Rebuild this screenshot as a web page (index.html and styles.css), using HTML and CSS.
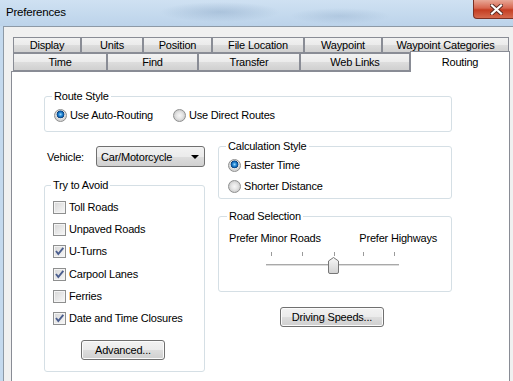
FILE: index.html
```html
<!DOCTYPE html>
<html lang="en">
<head>
    <meta charset="UTF-8">
    <meta name="viewport" content="width=device-width, initial-scale=1.0">
    <title>Preferences</title>
    <link rel="stylesheet" href="styles.css">
</head>
<body>
    <div class="window">
        <div class="titlebar">
            <span class="title">Preferences</span>
            <span class="close">
                <svg width="13" height="11" viewBox="0 0 13 11">
                    <path d="M2 1.5 L11 9.5 M11 1.5 L2 9.5" stroke="#5a2a22" stroke-width="4" stroke-linecap="square"/>
                    <path d="M2 1.5 L11 9.5 M11 1.5 L2 9.5" stroke="#ffffff" stroke-width="2.2" stroke-linecap="square"/>
                </svg>
            </span>
        </div>

        <div class="frame">
            <div class="client">
                <!-- tab strip, two rows -->
                <div class="tab-row">
                    <div class="tab w68">Display</div>
                    <div class="tab w62">Units</div>
                    <div class="tab w69">Position</div>
                    <div class="tab w92">File Location</div>
                    <div class="tab w78">Waypoint</div>
                    <div class="tab w127">Waypoint Categories</div>
                </div>
                <div class="tab-row second">
                    <div class="tab w94">Time</div>
                    <div class="tab w91">Find</div>
                    <div class="tab w102">Transfer</div>
                    <div class="tab w110">Web Links</div>
                    <div class="tab selected w100">Routing</div>
                </div>

                <div class="panel">
                    <fieldset class="group route">
                        <legend>Route Style</legend>
                        <div class="options">
                            <div class="opt"><span class="radio on"></span>Use Auto-Routing</div>
                            <div class="opt"><span class="radio"></span>Use Direct Routes</div>
                        </div>
                    </fieldset>

                    <div class="columns">
                        <div class="left">
                            <div class="vehicle">
                                <span>Vehicle:</span>
                                <div class="select">
                                    <span>Car/Motorcycle</span>
                                    <span class="arrow"></span>
                                </div>
                            </div>

                            <fieldset class="group avoid">
                                <legend>Try to Avoid</legend>
                                <div class="checks">
                                    <div class="opt"><span class="check"></span>Toll Roads</div>
                                    <div class="opt"><span class="check"></span>Unpaved Roads</div>
                                    <div class="opt"><span class="check"><svg width="11" height="11" viewBox="0 0 11 11"><path d="M2 5 L4.3 8 L9.3 1.8" fill="none" stroke="#4b5e8e" stroke-width="1.9"/></svg></span>U-Turns</div>
                                    <div class="opt"><span class="check"><svg width="11" height="11" viewBox="0 0 11 11"><path d="M2 5 L4.3 8 L9.3 1.8" fill="none" stroke="#4b5e8e" stroke-width="1.9"/></svg></span>Carpool Lanes</div>
                                    <div class="opt"><span class="check"></span>Ferries</div>
                                    <div class="opt"><span class="check"><svg width="11" height="11" viewBox="0 0 11 11"><path d="M2 5 L4.3 8 L9.3 1.8" fill="none" stroke="#4b5e8e" stroke-width="1.9"/></svg></span>Date and Time Closures</div>
                                </div>
                                <div class="button advanced">Advanced...</div>
                            </fieldset>
                        </div>

                        <div class="right">
                            <fieldset class="group calc">
                                <legend>Calculation Style</legend>
                                <div class="radios">
                                    <div class="opt"><span class="radio on"></span>Faster Time</div>
                                    <div class="opt"><span class="radio"></span>Shorter Distance</div>
                                </div>
                            </fieldset>

                            <fieldset class="group roads">
                                <legend>Road Selection</legend>
                                <div class="slider-labels">
                                    <span>Prefer Minor Roads</span>
                                    <span>Prefer Highways</span>
                                </div>
                                <svg class="slider" width="136" height="26" viewBox="0 0 136 26">
                                    <defs>
                                        <linearGradient id="thumb" x1="0" y1="0" x2="0" y2="1">
                                            <stop offset="0" stop-color="#f7f7f7"/>
                                            <stop offset="1" stop-color="#d2d2d2"/>
                                        </linearGradient>
                                    </defs>
                                    <rect x="6" y="2" width="1" height="4" fill="#9a9a9a"/>
                                    <rect x="37" y="2" width="1" height="4" fill="#9a9a9a"/>
                                    <rect x="69" y="2" width="1" height="4" fill="#9a9a9a"/>
                                    <rect x="98" y="2" width="1" height="4" fill="#9a9a9a"/>
                                    <rect x="129" y="2" width="1" height="4" fill="#9a9a9a"/>
                                    <rect x="1" y="14" width="133" height="1" fill="#a9a9a9"/>
                                    <rect x="1" y="15" width="133" height="1" fill="#dcdcdc"/>
                                    <path d="M63.5 11 L68.5 7.5 L73.5 11 L73.5 22 Q73.5 23.5 72 23.5 L65 23.5 Q63.5 23.5 63.5 22 Z" fill="url(#thumb)" stroke="#767676"/>
                                </svg>
                            </fieldset>

                            <div class="button speeds">Driving Speeds...</div>
                        </div>
                    </div>
                </div>
            </div>
        </div>
    </div>
</body>
</html>
```

FILE: styles.css
```css
* {
    box-sizing: border-box;
}

body {
    margin: 0;
    width: 513px;
    height: 381px;
    overflow: hidden;
    font-family: "Liberation Sans", Arial, sans-serif;
    font-size: 11px;
    letter-spacing: -0.2px;
    color: #000;
    background: #c4d9ee;
}

.window {
    width: 513px;
    height: 381px;
    display: flex;
    flex-direction: column;
}

/* title bar */
.titlebar {
    flex: none;
    height: 26px;
    display: flex;
    align-items: flex-start;
    background:
        radial-gradient(ellipse 60px 10px at 220px 12px, rgba(120, 150, 185, 0.35), transparent),
        radial-gradient(ellipse 50px 8px at 340px 16px, rgba(120, 150, 185, 0.25), transparent),
        linear-gradient(to bottom, #cfe1f2, #bcd3ea);
}

.title {
    padding: 5px 0 0 6px;
    font-size: 11.5px;
    line-height: 14px;
}

.close {
    margin-left: auto;
    margin-right: -7px;
    width: 47px;
    height: 19px;
    display: flex;
    align-items: center;
    justify-content: center;
    background: linear-gradient(to bottom, #e8a897, #d7664f 45%, #c43d22 55%, #d56a4e);
    border: 1px solid #7b3024;
    border-top: none;
    border-bottom-left-radius: 4px;
}

.frame {
    flex: 1;
    min-height: 0;
    display: flex;
    padding-left: 3px;
    background: #c4d9ee;
}

.client {
    flex: 1;
    overflow: hidden;
    background: #f0f0f0;
    border-left: 1px solid #8d99a6;
    border-top: 1px solid #8d99a6;
    padding-top: 10px;
}

/* tabs */
.tab-row {
    display: flex;
    margin-left: 9px;
    height: 16px;
}

.tab-row.second {
    height: 18px;
}

.tab {
    height: 100%;
    border: 1px solid #898c95;
    background: linear-gradient(to bottom, #f2f2f2, #ebebeb 50%, #dddddd 51%, #d0d0d0);
    text-align: center;
    line-height: 14px;
}

.tab-row.second .tab {
    line-height: 17px;
}

.tab-row.second .tab.selected {
    height: 21px;
    margin-top: -2px;
    margin-bottom: -1px;
    border-bottom: none;
    background: #fff;
    position: relative;
    z-index: 1;
    line-height: 20px;
}

.w62 { width: 62px; }
.w68 { width: 68px; }
.w69 { width: 69px; }
.w78 { width: 78px; }
.w91 { width: 91px; }
.w92 { width: 92px; }
.w94 { width: 94px; }
.w100 { width: 100px; }
.w102 { width: 102px; }
.w110 { width: 110px; }
.w127 { width: 127px; }

.panel {
    margin-left: 7px;
    width: 499px;
    height: 330px;
    background: #fff;
    border: 1px solid #898c95;
    padding: 18px 0 0 32px;
}

/* group boxes */
.group {
    margin: 0;
    min-width: 0;
    border: 1px solid #d5dfe5;
    border-radius: 3px;
    padding: 6px 9px 9px 9px;
}

.group legend {
    padding: 0 2px;
    margin-left: -2px;
    line-height: 13px;
}

.route {
    width: 408px;
}

.options {
    display: flex;
    gap: 20px;
}

.opt {
    display: flex;
    align-items: center;
    gap: 3px;
    height: 13px;
    line-height: 13px;
    white-space: nowrap;
}

.radio {
    width: 13px;
    height: 13px;
    border-radius: 50%;
    border: 1px solid #8e8f8f;
    background: radial-gradient(circle at 50% 50%, #f6f6f6 0, #e6e6e6 3px, #cfcfcf 5.5px);
    flex: none;
}

.radio.on {
    background: radial-gradient(circle at 50% 40%, #a7dbfa 0, #2f92dc 1.6px, #0c5ba8 3px, #0a3c74 3.6px, #e4e4e4 4.2px, #d4d4d4 5.5px);
}

.check {
    width: 13px;
    height: 13px;
    border: 1px solid #8e8f8f;
    background: linear-gradient(135deg, #d6d6d6, #f8f8f8);
    box-shadow: inset 0 0 0 1px #f4f4f4;
    flex: none;
    display: flex;
    align-items: center;
    justify-content: center;
}

.columns {
    display: grid;
    grid-template-columns: 161px 234px;
    column-gap: 13px;
    margin-top: 8px;
    align-items: start;
}

.left {
    padding-top: 6px;
}

.vehicle {
    display: flex;
    align-items: center;
    height: 21px;
    padding-left: 3px;
}

.select {
    margin-left: auto;
    width: 109px;
    height: 21px;
    display: flex;
    align-items: center;
    padding: 0 4px;
    border: 1px solid #707070;
    border-radius: 3px;
    background: linear-gradient(to bottom, #f2f2f2, #ebebeb 50%, #dddddd 51%, #d0d0d0);
}

.arrow {
    margin-left: auto;
    margin-right: 1px;
    width: 0;
    height: 0;
    border-left: 4px solid transparent;
    border-right: 4px solid transparent;
    border-top: 4px solid #000;
}

.avoid {
    margin-top: 11.5px;
    padding: 9px 9px 11px 8px;
}

.checks {
    display: flex;
    flex-direction: column;
    gap: 9.4px;
}

.button {
    height: 20px;
    border: 1px solid #707070;
    border-radius: 3px;
    background: linear-gradient(to bottom, #f2f2f2, #ebebeb 50%, #dddddd 51%, #cfcfcf);
    box-shadow: inset 0 0 0 1px #fbfbfb;
    text-align: center;
    line-height: 18px;
}

.advanced {
    width: 84px;
    margin: 14.5px auto 0;
    position: relative;
    left: -1px;
}

.calc {
    padding: 5.5px 9px 5.5px 9px;
}

.radios {
    display: flex;
    flex-direction: column;
    gap: 8px;
}

.roads {
    margin-top: 11px;
    padding: 8.5px 14px 15px 10px;
}

.slider-labels {
    display: flex;
    justify-content: space-between;
    line-height: 13px;
}

.slider {
    display: block;
    margin: 5.5px auto 0;
}

.speeds {
    width: 104px;
    margin: 15px 0 0 62px;
}
```
